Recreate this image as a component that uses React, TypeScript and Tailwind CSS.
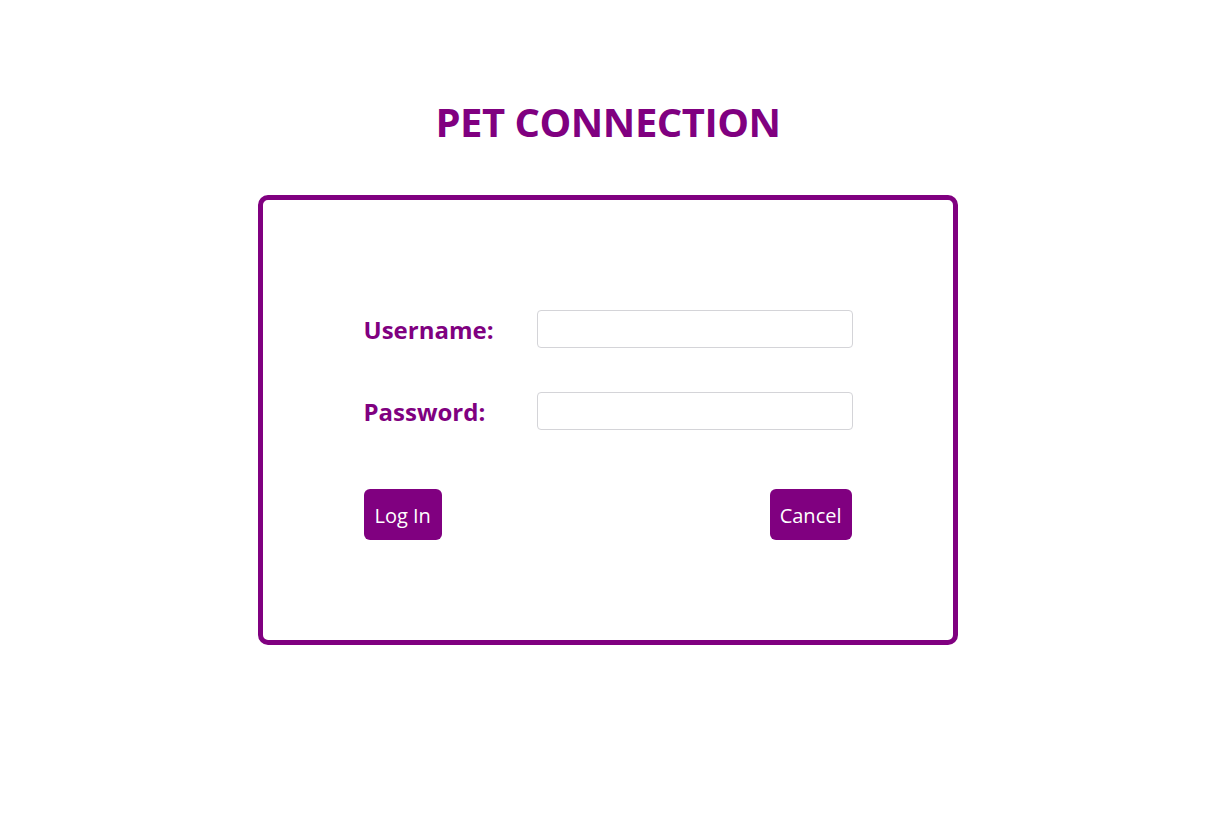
export default function App() {
  return (
    <div className="min-h-screen bg-white font-['Open_Sans',sans-serif]">
      <div className="w-[1216px] flex flex-col items-center pt-[95px]">
        {/* Title */}
        <h1 className="text-[40px] leading-[54px] font-bold text-[#800080] tracking-[-0.5px]">
          PET CONNECTION
        </h1>

        {/* Login Card */}
        <div className="mt-[46px] w-[700px] h-[450px] border-[5px] border-[#800080] rounded-[10px] flex flex-col items-center pt-[110px]">
          <div className="w-[489px] flex flex-col">
            <div className="flex items-center h-[38px]">
              <label className="w-[173px] text-[24px] font-bold text-[#800080] pt-[2px]">
                Username:
              </label>
              <input
                type="text"
                className="w-[316px] h-[38px] border border-[#d4d4d8] rounded-[4px] px-2 outline-none"
              />
            </div>
            <div className="flex items-center h-[38px] mt-[44px]">
              <label className="w-[173px] text-[24px] font-bold text-[#800080] pt-[2px]">
                Password:
              </label>
              <input
                type="password"
                className="w-[316px] h-[38px] border border-[#d4d4d8] rounded-[4px] px-2 outline-none"
              />
            </div>
            <div className="flex justify-between mt-[59px] pr-[1px]">
              <button className="h-[51px] px-[11px] pt-[2px] bg-[#800080] text-white text-[20px] rounded-[6px]">
                Log In
              </button>
              <button className="h-[51px] px-[10px] pt-[2px] bg-[#800080] text-white text-[20px] rounded-[6px]">
                Cancel
              </button>
            </div>
          </div>
        </div>
      </div>
    </div>
  );
}
